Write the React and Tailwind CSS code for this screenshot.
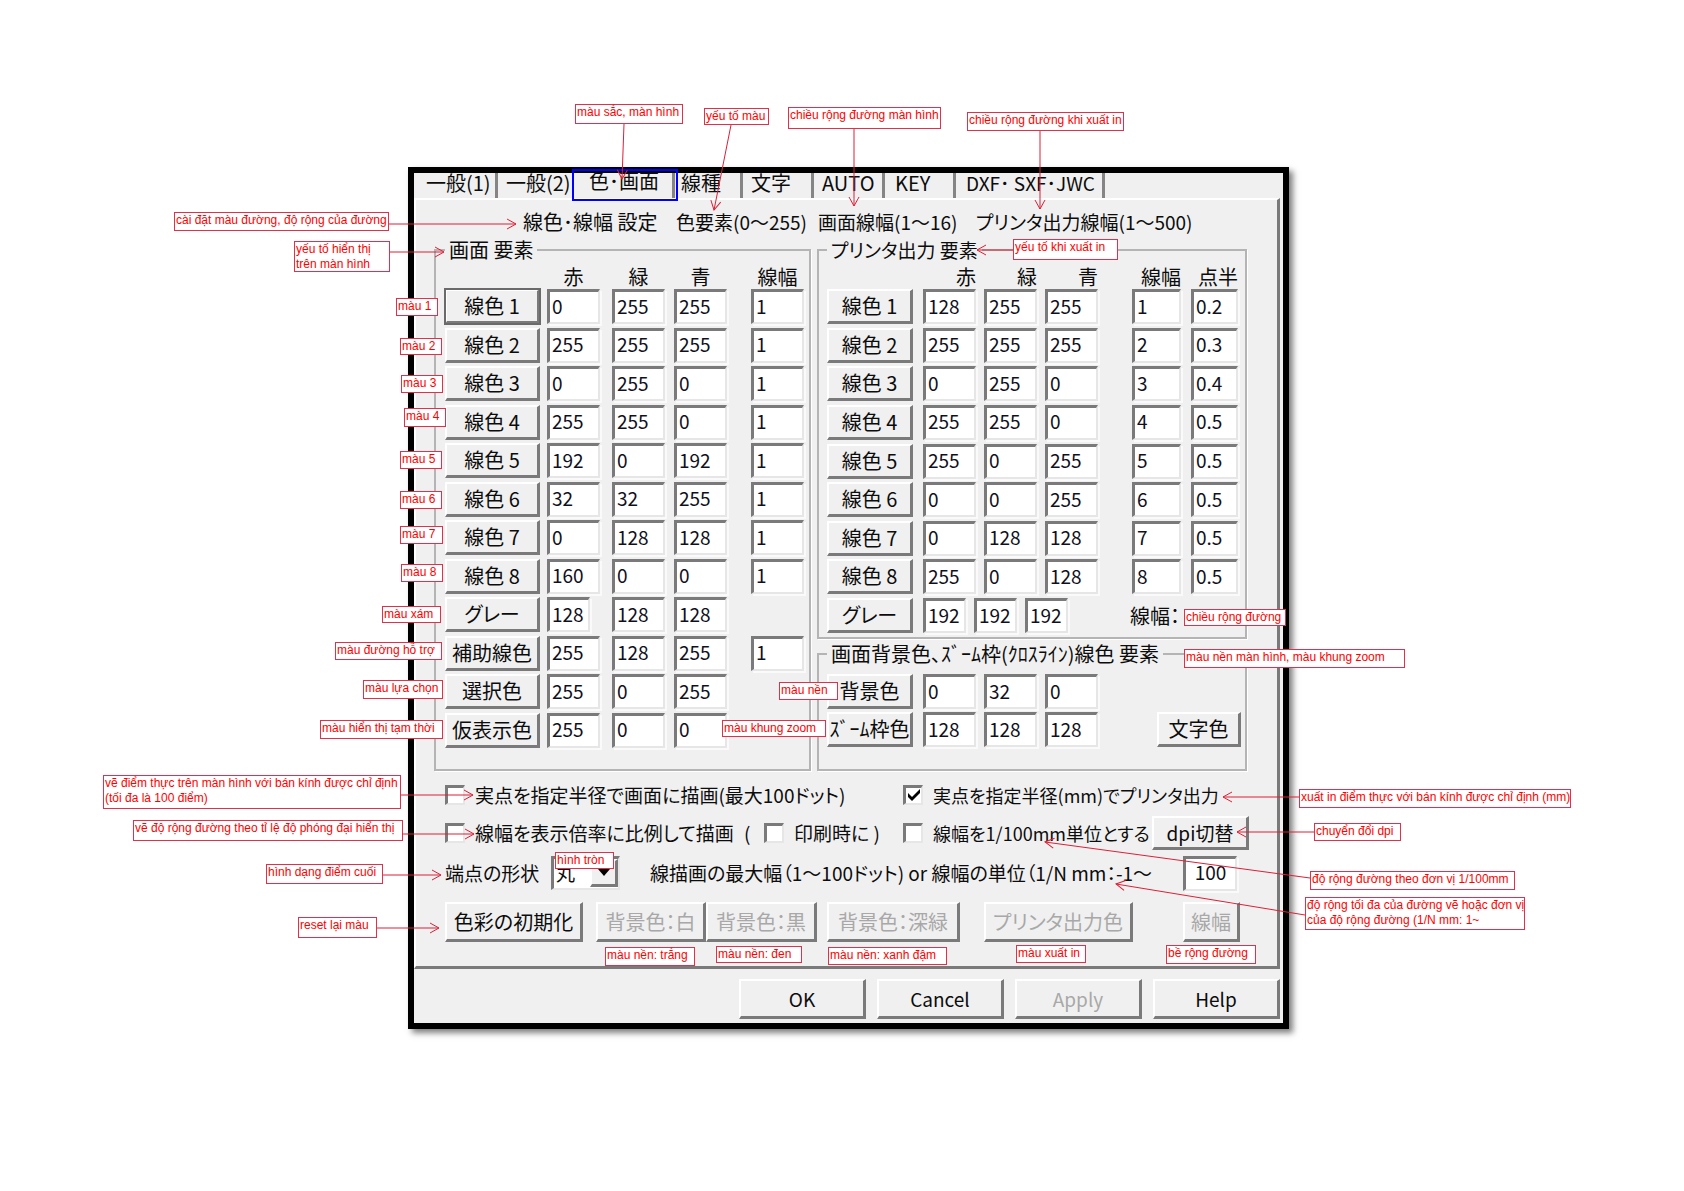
import { useState } from "react";
import clsx from "clsx";

const tabs = [
  { label: "一般(1)", style: "w-[84px] pl-3 border-r-[3px]" },
  { label: "一般(2)", style: "w-[77px] pl-2" },
  { label: "色･画面", style: "w-[100px] pl-3.5 border-r-[3px]" },
  { label: "線種", style: "w-[68px] pl-1.5 border-r-[3px]" },
  { label: "文字", style: "w-[71px] pl-2 border-r-[3px]" },
  { label: "AUTO", style: "w-[71px] pl-2 border-r-[3px]" },
  { label: "KEY", style: "w-[71px] pl-2.5 border-r-[3px]" },
  { label: "DXF･ SXF･JWC", style: "w-[149px] pl-2.5 border-r-[3px] text-[19px]" },
];

const screenRows = [
  { name: "線色 1", values: ["0", "255", "255", "1"] },
  { name: "線色 2", values: ["255", "255", "255", "1"] },
  { name: "線色 3", values: ["0", "255", "0", "1"] },
  { name: "線色 4", values: ["255", "255", "0", "1"] },
  { name: "線色 5", values: ["192", "0", "192", "1"] },
  { name: "線色 6", values: ["32", "32", "255", "1"] },
  { name: "線色 7", values: ["0", "128", "128", "1"] },
  { name: "線色 8", values: ["160", "0", "0", "1"] },
  { name: "グレー", values: ["128", "128", "128"] },
  { name: "補助線色", values: ["255", "128", "255", "1"] },
  { name: "選択色", values: ["255", "0", "255"] },
  { name: "仮表示色", values: ["255", "0", "0"] },
];

const printerRows = [
  { name: "線色 1", values: ["128", "255", "255", "1", "0.2"] },
  { name: "線色 2", values: ["255", "255", "255", "2", "0.3"] },
  { name: "線色 3", values: ["0", "255", "0", "3", "0.4"] },
  { name: "線色 4", values: ["255", "255", "0", "4", "0.5"] },
  { name: "線色 5", values: ["255", "0", "255", "5", "0.5"] },
  { name: "線色 6", values: ["0", "0", "255", "6", "0.5"] },
  { name: "線色 7", values: ["0", "128", "128", "7", "0.5"] },
  { name: "線色 8", values: ["255", "0", "128", "8", "0.5"] },
];

const backgroundRows = [
  { name: "背景色", values: ["0", "32", "0"] },
  { name: "ｽﾞｰﾑ枠色", values: ["128", "128", "128"] },
];

const columnNames = ["赤", "緑", "青", "線幅", "点半"];
const printerWidths = ["w-[53px]", "w-[53px]", "w-[53px]", "w-[49px]", "w-[47px]"];

// Callouts are pinned to the canvas: x, y, width, height
const notes = [
  { text: "màu sắc, màn hình", box: [575, 104, 108, 20] },
  { text: "yếu tố màu", box: [704, 108, 65, 17] },
  { text: "chiều rộng đường màn hình", box: [788, 107, 153, 22] },
  { text: "chiều rộng đường khi xuất in", box: [967, 112, 157, 19] },
  { text: "cài đặt màu đường, độ rộng của đường", box: [174, 212, 215, 19] },
  { text: "yếu tố hiển thị\ntrên màn hình", box: [294, 241, 96, 31] },
  { text: "yếu tố khi xuất in", box: [1013, 239, 105, 21] },
  { text: "màu 1", box: [396, 298, 42, 18] },
  { text: "màu 2", box: [400, 338, 42, 17] },
  { text: "màu 3", box: [401, 375, 42, 18] },
  { text: "màu 4", box: [404, 408, 42, 19] },
  { text: "màu 5", box: [400, 451, 42, 18] },
  { text: "màu 6", box: [400, 491, 42, 18] },
  { text: "màu 7", box: [400, 526, 43, 18] },
  { text: "màu 8", box: [401, 564, 42, 18] },
  { text: "màu xám", box: [382, 606, 59, 17] },
  { text: "màu đường hỗ trợ", box: [335, 642, 107, 18] },
  { text: "màu lựa chọn", box: [363, 680, 80, 19] },
  { text: "màu hiển thị tạm thời", box: [320, 720, 123, 19] },
  { text: "vẽ điểm thực trên màn hình với bán kính được chỉ định\n(tối đa là 100 điểm)", box: [103, 775, 298, 34] },
  { text: "vẽ độ rộng đường theo tỉ lệ độ phóng đại hiển thị", box: [133, 820, 270, 21] },
  { text: "hình dạng điểm cuối", box: [266, 864, 117, 20] },
  { text: "reset lại màu", box: [298, 917, 79, 21] },
  { text: "màu nền", box: [779, 682, 59, 18] },
  { text: "màu khung zoom", box: [722, 720, 104, 17] },
  { text: "hình tròn", box: [555, 852, 59, 17] },
  { text: "chiều rộng đường", box: [1184, 609, 102, 17] },
  { text: "màu nền màn hình, màu khung zoom", box: [1184, 649, 221, 19] },
  { text: "xuất in điểm thực với bán kính được chỉ định (mm)", box: [1299, 789, 272, 19] },
  { text: "chuyển đổi dpi", box: [1314, 823, 87, 18] },
  { text: "độ rộng đường theo đơn vị 1/100mm", box: [1310, 871, 205, 19] },
  { text: "độ rộng tối đa của đường vẽ hoặc đơn vị\ncủa độ rộng đường (1/N mm: 1~", box: [1305, 897, 216, 33] },
  { text: "màu nền: trắng", box: [605, 947, 90, 19] },
  { text: "màu nền: đen", box: [716, 946, 86, 17] },
  { text: "màu nền: xanh đậm", box: [828, 947, 119, 18] },
  { text: "màu xuất in", box: [1016, 945, 70, 18] },
  { text: "bề rộng đường", box: [1166, 945, 90, 19] },
];

const arrows = [
  [624, 124, 622, 179],
  [731, 125, 714, 210],
  [854, 129, 854, 206],
  [1040, 131, 1040, 209],
  [389, 224, 516, 224],
  [390, 252, 444, 252],
  [1013, 250, 977, 250],
  [401, 795, 473, 795],
  [402, 834, 474, 834],
  [383, 875, 441, 875],
  [377, 928, 439, 928],
  [1299, 797, 1223, 797],
  [1314, 832, 1237, 832],
  [1310, 878, 1045, 842],
  [1305, 915, 1116, 884],
];

function PushButton({ className, children, disabled, focused }) {
  return (
    <button
      type="button"
      disabled={disabled}
      className={clsx(
        "shrink-0 whitespace-nowrap overflow-hidden border-t-2 border-l-2 border-r-3 border-b-3 border-t-white border-l-white border-r-[#7a7a7a] border-b-[#7a7a7a] bg-[#f0f0f0] text-center leading-6",
        disabled ? "text-[#a8a8a8]" : "text-[#0c0c0c]",
        focused && "outline-2 -outline-offset-1 outline-[#6a6a6a]",
        className
      )}
    >
      {children}
    </button>
  );
}

function NumberBox({ id, label, value, className }) {
  return (
    <input
      id={id}
      type="text"
      aria-label={label}
      defaultValue={value}
      className={clsx(
        "h-[35px] shrink-0 border-t-3 border-l-3 border-r-2 border-b-2 border-t-[#7a7a7a] border-l-[#7a7a7a] border-r-[#e6e6e6] border-b-[#e6e6e6] bg-white pb-1 text-[19px] leading-6 text-[#10101c] outline-none shadow-[2px_2px_0_#fafafa]",
        className
      )}
    />
  );
}

function CheckBox({ id, checked }) {
  const [on, setOn] = useState(checked);
  return (
    <span className="relative h-5 w-5 shrink-0">
      <input
        id={id}
        type="checkbox"
        checked={on}
        onChange={(e) => setOn(e.target.checked)}
        className="block h-5 w-5 appearance-none border-t-3 border-l-3 border-r-2 border-b-2 border-t-[#7a7a7a] border-l-[#7a7a7a] border-r-[#e6e6e6] border-b-[#e6e6e6] bg-white"
      />
      {on && (
        <svg viewBox="0 0 20 20" className="pointer-events-none absolute inset-0 h-5 w-5">
          <path d="M5 8v4l4 4 8-8V4l-8 8z" fill="#000" />
        </svg>
      )}
    </span>
  );
}

function Group({ title, className, legendClass, children }) {
  return (
    <fieldset className={clsx("min-w-0 border-2 border-[#b4b4b4] shadow-[1px_1px_0_#fff]", className)}>
      <legend className={clsx("px-1 leading-6 whitespace-nowrap", legendClass)}>{title}</legend>
      {children}
    </fieldset>
  );
}

function Note({ text, box }) {
  const [left, top, minWidth, height] = box;
  return (
    <div
      className="absolute border border-[#e0304c] bg-white pl-px text-xs leading-[15px] whitespace-pre text-[#ff0000]"
      style={{ left, top, minWidth, height }}
    >
      {text}
    </div>
  );
}

function App() {
  const [tab, setTab] = useState(2);

  return (
    <div className="relative min-h-screen overflow-hidden bg-white pt-[167px] pr-[395px] pb-40 pl-[408px] font-['Liberation_Sans',sans-serif]">
      <main className="border-6 border-black bg-[#f0f0f0] pr-[3px] pb-1 font-['Noto_Sans_CJK_JP',sans-serif] text-[20px] text-[#0c0c0c] shadow-[4px_4px_6px_rgba(0,0,0,0.5)] [font-feature-settings:'palt']">
        <div role="tablist" className="flex h-[25px]">
          {tabs.map((item, i) => (
            <button
              key={item.label}
              type="button"
              role="tab"
              aria-selected={tab === i}
              onClick={() => setTab(i)}
              className={clsx(
                "flex shrink-0 border-[#858585] text-left whitespace-nowrap",
                tab === i ? "leading-4" : "leading-5",
                item.style
              )}
            >
              {item.label}
            </button>
          ))}
        </div>

        <section className="border-t-2 border-r-3 border-b-3 border-l-2 border-t-white border-r-[#7a7a7a] border-b-[#7a7a7a] border-l-white pt-2.5 pr-[30px] pb-6 pl-[18px]">
          <div className="flex pl-[89px] leading-6 whitespace-nowrap">
            <span className="w-[153px]">線色･線幅 設定</span>
            <span className="w-[142px] text-[19px]">色要素(0～255)</span>
            <span className="w-[158px] text-[19px]">画面線幅(1～16)</span>
            <span className="text-[19px]">プリンタ出力線幅(1～500)</span>
          </div>

          <div className="mt-1 grid grid-cols-[377fr_430fr] gap-1.5">
            <Group title="画面 要素" className="pb-[21px] pl-[9px]">
              <div className="grid h-[27px] grid-cols-[102px_65px_62px_77px_53px] items-end text-center leading-6">
                <span />
                {columnNames.slice(0, 4).map((name) => (
                  <span key={name} className="w-[53px]">{name}</span>
                ))}
              </div>
              <div className="flex min-h-[459px] flex-col justify-between">
                {screenRows.map((row, r) => (
                  <div key={row.name} className="grid grid-cols-[102px_65px_62px_77px_53px]">
                    <PushButton className="w-[95px]" focused={r === 0}>{row.name}</PushButton>
                    {row.values.map((value, i) => (
                      <NumberBox
                        key={i}
                        label={`${row.name} ${columnNames[i]}`}
                        value={value}
                        className={row.name === "グレー" && i === 0 ? "w-[43px] pl-0.5" : "w-[53px] pl-0.5"}
                      />
                    ))}
                  </div>
                ))}
              </div>
            </Group>

            <div className="flex min-w-0 flex-col gap-[3px]">
              <Group title="プリンタ出力 要素" className="pb-1 pl-2" legendClass="text-[19px]">
                <div className="grid h-[27px] grid-cols-[96px_61px_61px_87px_59px_47px] items-end text-right leading-6">
                  <span />
                  {columnNames.map((name, i) => (
                    <span key={name} className={printerWidths[i]}>{name}</span>
                  ))}
                </div>
                <div className="flex min-h-[344px] flex-col justify-between">
                  {printerRows.map((row) => (
                    <div key={row.name} className="grid grid-cols-[96px_61px_61px_87px_59px_47px]">
                      <PushButton className="w-[86px]">{row.name}</PushButton>
                      {row.values.map((value, i) => (
                        <NumberBox
                          key={i}
                          label={`プリンタ ${row.name} ${columnNames[i]}`}
                          value={value}
                          className={clsx("pl-0.5", printerWidths[i])}
                        />
                      ))}
                    </div>
                  ))}
                  <div className="flex items-center gap-2">
                    <PushButton className="mr-0.5 h-[35px] w-[86px]">グレー</PushButton>
                    <NumberBox label="プリンタ グレー 赤" value="192" className="w-[43px] pl-0.5" />
                    <NumberBox label="プリンタ グレー 緑" value="192" className="w-[43px] pl-0.5" />
                    <NumberBox label="プリンタ グレー 青" value="192" className="w-[43px] pl-0.5" />
                    <span className="pl-[54px]">線幅：</span>
                  </div>
                </div>
              </Group>

              <Group title="画面背景色、ｽﾞｰﾑ枠(ｸﾛｽﾗｲﾝ)線色 要素" className="flex-1 pl-2">
                <div className="flex items-end justify-between pt-2 pr-1">
                  <div className="flex flex-col gap-[3px]">
                    {backgroundRows.map((row) => (
                      <div key={row.name} className="grid grid-cols-[96px_61px_61px_53px]">
                        <PushButton className="w-[86px]">{row.name}</PushButton>
                        {row.values.map((value, i) => (
                          <NumberBox
                            key={i}
                            label={`${row.name} ${columnNames[i]}`}
                            value={value}
                            className="w-[53px] pl-0.5"
                          />
                        ))}
                      </div>
                    ))}
                  </div>
                  <PushButton className="h-[35px] w-[84px]">文字色</PushButton>
                </div>
              </Group>
            </div>
          </div>

          <div className="flex flex-col pt-2 pl-[11px] text-[19px] whitespace-nowrap">
            <div className="flex h-8 items-center">
              <CheckBox id="dot-screen" checked={false} />
              <label htmlFor="dot-screen" className="w-[438px] shrink-0 pl-2.5">
                実点を指定半径で画面に描画(最大100ドット)
              </label>
              <CheckBox id="dot-printer" checked />
              <label htmlFor="dot-printer" className="pl-2.5 text-lg">
                実点を指定半径(mm)でプリンタ出力
              </label>
            </div>

            <div className="mt-[5px] flex h-[34px] items-center">
              <CheckBox id="width-scale" checked={false} />
              <label htmlFor="width-scale" className="w-[269px] shrink-0 pl-2.5">
                線幅を表示倍率に比例して描画
              </label>
              <span className="w-[30px] shrink-0 pl-2.5">(</span>
              <CheckBox id="width-print" checked={false} />
              <label htmlFor="width-print" className="w-[119px] shrink-0 pl-2.5">印刷時に )</label>
              <CheckBox id="width-unit" checked={false} />
              <label htmlFor="width-unit" className="w-[229px] shrink-0 pl-2.5 text-lg">
                線幅を1/100mm単位とする
              </label>
              <PushButton className="h-[34px] w-[97px] text-[19px]">dpi切替</PushButton>
            </div>

            <div className="mt-1.5 flex h-[34px] items-center">
              <label htmlFor="end-shape" className="w-[106px] shrink-0">端点の形状</label>
              <span className="relative shrink-0">
                <select
                  id="end-shape"
                  className="block h-[34px] w-[69px] appearance-none border-t-3 border-l-3 border-r-2 border-b-2 border-t-[#7a7a7a] border-l-[#7a7a7a] border-r-[#e6e6e6] border-b-[#e6e6e6] bg-white pl-0.5"
                >
                  <option>丸</option>
                </select>
                <span className="pointer-events-none absolute inset-y-[3px] right-0.5 flex w-7 items-center justify-center border-t-2 border-l-2 border-r-3 border-b-3 border-t-white border-l-white border-r-[#7a7a7a] border-b-[#7a7a7a] bg-[#f0f0f0]">
                  <svg viewBox="0 0 12 7" className="h-[7px] w-3">
                    <path d="M0 0h12L6 7z" fill="#000" />
                  </svg>
                </span>
              </span>
              <label htmlFor="max-width" className="w-[563px] shrink-0 pl-[30px]">
                線描画の最大幅（1～100ドット) or 線幅の単位（1/N mm：-1～
              </label>
              <NumberBox id="max-width" label="最大幅" value="100" className="w-[54px] text-center" />
            </div>

            <div className="mt-3 flex h-10 text-[20px]">
              <PushButton className="w-[138px]">色彩の初期化</PushButton>
              <PushButton disabled className="ml-[13px] w-[110px] border-r-0">背景色：白</PushButton>
              <PushButton disabled className="w-[111px]">背景色：黒</PushButton>
              <PushButton disabled className="ml-2.5 w-[133px]">背景色：深緑</PushButton>
              <PushButton disabled className="ml-6 w-[149px]">プリンタ出力色</PushButton>
              <PushButton disabled className="ml-[50px] w-[57px]">線幅</PushButton>
            </div>
          </div>
        </section>

        <footer className="mt-2.5 flex justify-end gap-[11px]">
          <PushButton className="h-10 w-[127px] text-[19px]">OK</PushButton>
          <PushButton className="h-10 w-[127px] text-[19px]">Cancel</PushButton>
          <PushButton disabled className="h-10 w-[127px] text-[19px]">Apply</PushButton>
          <PushButton className="h-10 w-[127px] text-[19px]">Help</PushButton>
        </footer>
      </main>

      <div className="pointer-events-none absolute top-[169px] left-[572px] h-8 w-[106px] border-2 border-[#0000ff]" />
      {notes.map((note) => (
        <Note key={note.text} {...note} />
      ))}
      <svg className="pointer-events-none absolute top-0 left-0" width="1684" height="1191" fill="none" stroke="#dc2038">
        <defs>
          <marker id="tip" markerWidth="12" markerHeight="12" refX="10" refY="6" orient="auto" markerUnits="userSpaceOnUse">
            <path d="M1 1l9 5-9 5" />
          </marker>
        </defs>
        {arrows.map(([x1, y1, x2, y2]) => (
          <line key={`${x1}-${y1}`} x1={x1} y1={y1} x2={x2} y2={y2} markerEnd="url(#tip)" />
        ))}
      </svg>
    </div>
  );
}

export default App;
